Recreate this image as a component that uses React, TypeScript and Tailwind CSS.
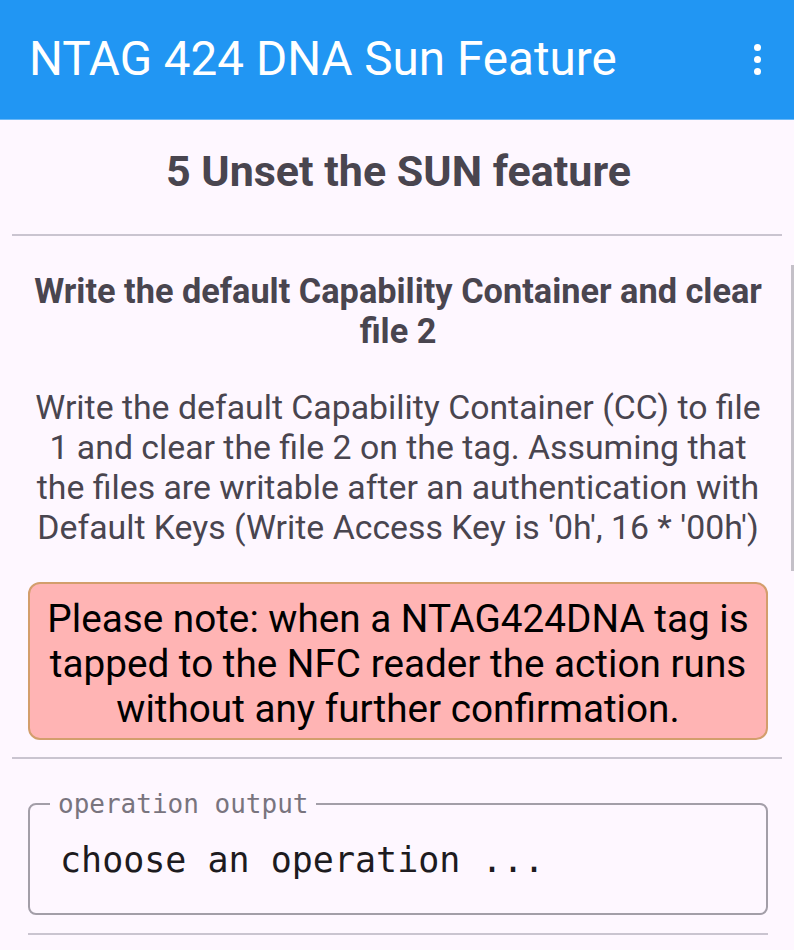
import React from 'react';

const App: React.FC = () => {
  return (
    <div className="relative min-h-[950px] w-[794px] overflow-hidden bg-[#fef7ff] font-['Roboto',sans-serif]">
      {/* app bar */}
      <div className="flex h-[120px] items-center justify-between border-b border-[#6ab8f7] bg-[#2196f3] pl-[29px] pr-[30px]">
        <h1 className="mt-[1px] text-[47.6px] leading-none text-white">NTAG 424 DNA Sun Feature</h1>
        <div className="flex flex-col items-center gap-[5px] pr-[3px]">
          <span className="h-[7px] w-[7px] rounded-full bg-white"></span>
          <span className="h-[7px] w-[7px] rounded-full bg-white"></span>
          <span className="h-[7px] w-[7px] rounded-full bg-white"></span>
        </div>
      </div>

      <div className="px-[12px]">
        <h2 className="mt-[26px] pl-[3px] text-center text-[43px] font-bold leading-[50px] text-[#49454f]">5 Unset the SUN feature</h2>
        <div className="mt-[38px] h-[2px] bg-[#cac4d0]"></div>

        <div className="pl-[16px] pr-[14px]">
          <h3 className="mt-[35px] text-center text-[34.3px] font-bold leading-[40px] text-[#49454f]">
            Write the default Capability Container and clear file 2
          </h3>
          <p className="mt-[37px] text-center text-[33.8px] leading-[40px] text-[#49454f]">
            Write the default Capability Container (CC) to file 1 and clear the file 2 on the tag. Assuming that the files are writable after an authentication with Default Keys (Write Access Key is '0h', 16 * '00h')
          </p>

          <div className="mt-[34px] rounded-[12px] border-2 border-[#d39e6c] bg-[#ffb4b4] px-[8px] pb-[7px] pt-[12px] text-center text-[38.7px] leading-[45px] text-black">
            Please note: when a NTAG424DNA tag is tapped to the NFC reader the action runs without any further confirmation.
          </div>
        </div>

        <div className="mt-[17px] h-[2px] bg-[#cac4d0]"></div>

        <div className="pl-[16px] pr-[14px]">
          <fieldset className="mt-[30px] h-[126px] rounded-[8px] border-2 border-[#a39ea8] pl-[20px] font-['DejaVu_Sans_Mono',monospace]">
            <legend className="px-[8px] text-[26px] leading-[30px] text-[#79747e]">operation output</legend>
            <div className="ml-[10px] mt-[21px] text-[35px] leading-[40px] text-[#1d1b20]">choose an operation ...</div>
          </fieldset>
          <div className="mt-[18px] h-[2px] bg-[#cac4d0]"></div>
        </div>
      </div>

      {/* scroll indicator */}
      <div className="absolute right-0 top-[265px] h-[306px] w-[3px] bg-[#c4c0c8]"></div>
    </div>
  );
};

export default App;
